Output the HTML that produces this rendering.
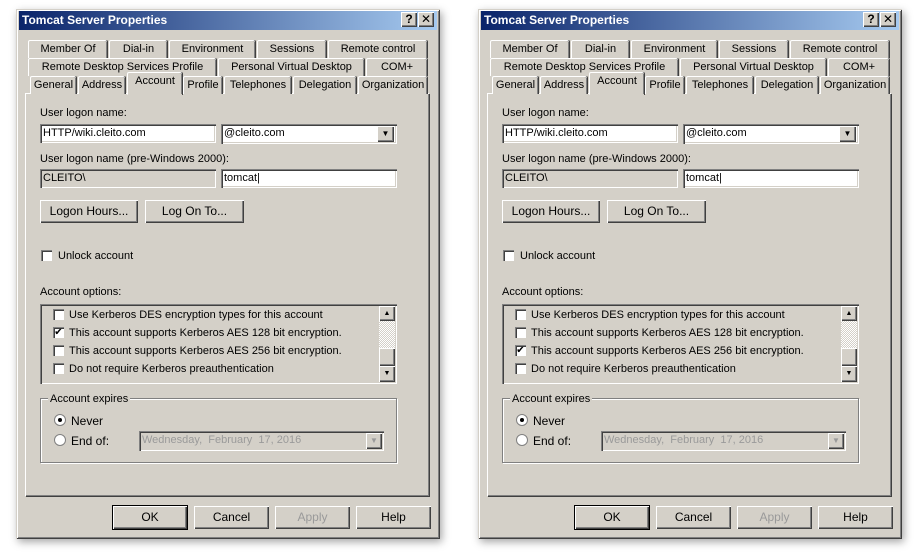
<!DOCTYPE html><html><head><meta charset="utf-8"><style>
body{margin:0;width:919px;height:559px;background:#fff;font-family:"Liberation Sans",Arial,sans-serif;font-size:11px;color:#000;overflow:hidden;position:relative}
.a{position:absolute}
.dlg{position:absolute;top:9px;width:424px;height:530px;background:#d4d0c8;box-shadow:inset 1px 1px #d4d0c8,inset -1px -1px #404040,inset 2px 2px #fff,inset -2px -2px #808080,2px 3px 8px rgba(0,0,0,.35)}
.tb{left:3px;top:2px;width:418px;height:19px;background:linear-gradient(90deg,#0a246a,#a6caf0);color:#fff;font-weight:bold;font-size:12px;line-height:19px;text-indent:3px}
.rb{background:#d4d0c8;box-shadow:inset 1px 1px #fff,inset -1px -1px #404040,inset -2px -2px #808080;text-align:center}
.tab{background:#d4d0c8;border-left:1px solid #fff;border-top:1px solid #fff;box-shadow:inset -1px 0 #808080, 1px 0 #404040;border-radius:2px 2px 0 0;text-align:center;line-height:17px;height:17px}
.pan{left:9px;top:84px;width:403px;height:402px;border-left:1px solid #fff;border-top:1px solid #fff;box-shadow:inset -1px -1px #808080,1px 1px #404040}
.sk{box-shadow:inset 1px 1px #808080,inset 2px 2px #404040,inset -1px -1px #fff,inset -2px -2px #d4d0c8;background:#fff;line-height:18px;text-indent:3px}
.cb{width:11px;height:11px;background:#fff;box-shadow:inset 1px 1px #808080,inset 2px 2px #404040,inset -1px -1px #fff;font-size:10px;line-height:11px;text-align:center}
.rd{width:12px;height:12px;border-radius:50%;background:#fff;border:1px solid #808080;box-sizing:border-box}
.btn{height:23px;line-height:22px;font-size:12px}
</style></head><body>

<div class="dlg" style="left:16px">
<div class="a tb">Tomcat Server Properties</div>
<div class="a rb" style="left:385px;top:3px;width:16px;height:15px;font-weight:bold;line-height:15px;font-size:12px">?</div>
<div class="a rb" style="left:402px;top:3px;width:16px;height:15px;line-height:15px;font-size:12px">✕</div>
<div class="a tab" style="left:12px;top:31px;width:78px">Member Of</div>
<div class="a tab" style="left:93px;top:31px;width:57px">Dial-in</div>
<div class="a tab" style="left:153px;top:31px;width:85px">Environment</div>
<div class="a tab" style="left:241px;top:31px;width:68px">Sessions</div>
<div class="a tab" style="left:312px;top:31px;width:98px">Remote control</div>
<div class="a tab" style="left:12px;top:49px;width:187px">Remote Desktop Services Profile</div>
<div class="a tab" style="left:202px;top:49px;width:145px">Personal Virtual Desktop</div>
<div class="a tab" style="left:350px;top:49px;width:60px">COM+</div>
<div class="a pan"></div>
<div class="a tab" style="left:14px;top:67px;width:45px">General</div>
<div class="a tab" style="left:62px;top:67px;width:46px">Address</div>
<div class="a tab" style="left:111px;top:63px;width:54px;height:21px;border-bottom:1px solid #d4d0c8">Account</div>
<div class="a tab" style="left:167px;top:67px;width:38px">Profile</div>
<div class="a tab" style="left:208px;top:67px;width:66px">Telephones</div>
<div class="a tab" style="left:277px;top:67px;width:62px">Delegation</div>
<div class="a tab" style="left:342px;top:67px;width:68px">Organization</div>
<div class="a" style="left:24px;top:98px">User logon name:</div>
<div class="a sk" style="left:24px;top:115px;width:176px;height:19px">HTTP/wiki.cleito.com</div>
<div class="a sk" style="left:205px;top:115px;width:176px;height:20px">@cleito.com</div>
<div class="a rb" style="left:361px;top:117px;width:17px;height:16px;font-size:8px;line-height:16px">▼</div>
<div class="a" style="left:24px;top:144px">User logon name (pre-Windows 2000):</div>
<div class="a sk" style="left:24px;top:160px;width:176px;height:19px;background:#d4d0c8">CLEITO\</div>
<div class="a sk" style="left:205px;top:160px;width:176px;height:19px">tomcat|</div>
<div class="a rb btn" style="left:24px;top:191px;width:98px">Logon Hours...</div>
<div class="a rb btn" style="left:129px;top:191px;width:99px">Log On To...</div>
<div class="a cb" style="left:25px;top:241px"></div>
<div class="a" style="left:42px;top:241px">Unlock account</div>
<div class="a" style="left:24px;top:277px">Account options:</div>
<div class="a sk" style="left:24px;top:295px;width:357px;height:80px;background:#d4d0c8"></div>
<div class="a cb" style="left:37px;top:300px"></div><div class="a" style="left:53px;top:300px">Use Kerberos DES encryption types for this account</div>
<div class="a cb" style="left:37px;top:318px">✔</div><div class="a" style="left:53px;top:318px">This account supports Kerberos AES 128 bit encryption.</div>
<div class="a cb" style="left:37px;top:336px"></div><div class="a" style="left:53px;top:336px">This account supports Kerberos AES 256 bit encryption.</div>
<div class="a cb" style="left:37px;top:354px"></div><div class="a" style="left:53px;top:354px">Do not require Kerberos preauthentication</div>
<div class="a" style="left:363px;top:297px;width:16px;height:76px;background:repeating-conic-gradient(#fff 0 25%,#d4d0c8 0 50%) 0 0/2px 2px"></div>
<div class="a rb" style="left:363px;top:297px;width:16px;height:15px;font-size:7px;line-height:15px">▲</div>
<div class="a rb" style="left:363px;top:339px;width:16px;height:18px"></div>
<div class="a rb" style="left:363px;top:357px;width:16px;height:16px;font-size:7px;line-height:16px">▼</div>
<div class="a" style="left:24px;top:389px;width:355px;height:63px;border:1px solid #808080;box-shadow:1px 1px #fff,inset 1px 1px #fff"></div>
<div class="a" style="left:32px;top:384px;background:#d4d0c8;padding:0 2px">Account expires</div>
<div class="a rd" style="left:38px;top:405px"><div class="a" style="left:3px;top:3px;width:4px;height:4px;border-radius:50%;background:#000"></div></div>
<div class="a" style="left:55px;top:405px;font-size:12px">Never</div>
<div class="a rd" style="left:38px;top:425px"></div>
<div class="a" style="left:55px;top:425px;font-size:12px">End of:</div>
<div class="a sk" style="left:123px;top:422px;width:245px;height:20px;background:#d4d0c8;color:#9a9a9a">Wednesday,&nbsp; February&nbsp; 17, 2016</div>
<div class="a rb" style="left:350px;top:424px;width:16px;height:16px;font-size:8px;line-height:16px;color:#9a9a9a">▼</div>
<div class="a rb btn" style="left:97px;top:497px;width:74px;box-shadow:0 0 0 1px #000,inset 1px 1px #fff,inset -1px -1px #404040,inset -2px -2px #808080">OK</div>
<div class="a rb btn" style="left:178px;top:497px;width:75px">Cancel</div>
<div class="a rb btn" style="left:259px;top:497px;width:75px;color:#9a9a9a">Apply</div>
<div class="a rb btn" style="left:340px;top:497px;width:75px">Help</div>
</div>

<div class="dlg" style="left:478px">
<div class="a tb">Tomcat Server Properties</div>
<div class="a rb" style="left:385px;top:3px;width:16px;height:15px;font-weight:bold;line-height:15px;font-size:12px">?</div>
<div class="a rb" style="left:402px;top:3px;width:16px;height:15px;line-height:15px;font-size:12px">✕</div>
<div class="a tab" style="left:12px;top:31px;width:78px">Member Of</div>
<div class="a tab" style="left:93px;top:31px;width:57px">Dial-in</div>
<div class="a tab" style="left:153px;top:31px;width:85px">Environment</div>
<div class="a tab" style="left:241px;top:31px;width:68px">Sessions</div>
<div class="a tab" style="left:312px;top:31px;width:98px">Remote control</div>
<div class="a tab" style="left:12px;top:49px;width:187px">Remote Desktop Services Profile</div>
<div class="a tab" style="left:202px;top:49px;width:145px">Personal Virtual Desktop</div>
<div class="a tab" style="left:350px;top:49px;width:60px">COM+</div>
<div class="a pan"></div>
<div class="a tab" style="left:14px;top:67px;width:45px">General</div>
<div class="a tab" style="left:62px;top:67px;width:46px">Address</div>
<div class="a tab" style="left:111px;top:63px;width:54px;height:21px;border-bottom:1px solid #d4d0c8">Account</div>
<div class="a tab" style="left:167px;top:67px;width:38px">Profile</div>
<div class="a tab" style="left:208px;top:67px;width:66px">Telephones</div>
<div class="a tab" style="left:277px;top:67px;width:62px">Delegation</div>
<div class="a tab" style="left:342px;top:67px;width:68px">Organization</div>
<div class="a" style="left:24px;top:98px">User logon name:</div>
<div class="a sk" style="left:24px;top:115px;width:176px;height:19px">HTTP/wiki.cleito.com</div>
<div class="a sk" style="left:205px;top:115px;width:176px;height:20px">@cleito.com</div>
<div class="a rb" style="left:361px;top:117px;width:17px;height:16px;font-size:8px;line-height:16px">▼</div>
<div class="a" style="left:24px;top:144px">User logon name (pre-Windows 2000):</div>
<div class="a sk" style="left:24px;top:160px;width:176px;height:19px;background:#d4d0c8">CLEITO\</div>
<div class="a sk" style="left:205px;top:160px;width:176px;height:19px">tomcat|</div>
<div class="a rb btn" style="left:24px;top:191px;width:98px">Logon Hours...</div>
<div class="a rb btn" style="left:129px;top:191px;width:99px">Log On To...</div>
<div class="a cb" style="left:25px;top:241px"></div>
<div class="a" style="left:42px;top:241px">Unlock account</div>
<div class="a" style="left:24px;top:277px">Account options:</div>
<div class="a sk" style="left:24px;top:295px;width:357px;height:80px;background:#d4d0c8"></div>
<div class="a cb" style="left:37px;top:300px"></div><div class="a" style="left:53px;top:300px">Use Kerberos DES encryption types for this account</div>
<div class="a cb" style="left:37px;top:318px"></div><div class="a" style="left:53px;top:318px">This account supports Kerberos AES 128 bit encryption.</div>
<div class="a cb" style="left:37px;top:336px">✔</div><div class="a" style="left:53px;top:336px">This account supports Kerberos AES 256 bit encryption.</div>
<div class="a cb" style="left:37px;top:354px"></div><div class="a" style="left:53px;top:354px">Do not require Kerberos preauthentication</div>
<div class="a" style="left:363px;top:297px;width:16px;height:76px;background:repeating-conic-gradient(#fff 0 25%,#d4d0c8 0 50%) 0 0/2px 2px"></div>
<div class="a rb" style="left:363px;top:297px;width:16px;height:15px;font-size:7px;line-height:15px">▲</div>
<div class="a rb" style="left:363px;top:339px;width:16px;height:18px"></div>
<div class="a rb" style="left:363px;top:357px;width:16px;height:16px;font-size:7px;line-height:16px">▼</div>
<div class="a" style="left:24px;top:389px;width:355px;height:63px;border:1px solid #808080;box-shadow:1px 1px #fff,inset 1px 1px #fff"></div>
<div class="a" style="left:32px;top:384px;background:#d4d0c8;padding:0 2px">Account expires</div>
<div class="a rd" style="left:38px;top:405px"><div class="a" style="left:3px;top:3px;width:4px;height:4px;border-radius:50%;background:#000"></div></div>
<div class="a" style="left:55px;top:405px;font-size:12px">Never</div>
<div class="a rd" style="left:38px;top:425px"></div>
<div class="a" style="left:55px;top:425px;font-size:12px">End of:</div>
<div class="a sk" style="left:123px;top:422px;width:245px;height:20px;background:#d4d0c8;color:#9a9a9a">Wednesday,&nbsp; February&nbsp; 17, 2016</div>
<div class="a rb" style="left:350px;top:424px;width:16px;height:16px;font-size:8px;line-height:16px;color:#9a9a9a">▼</div>
<div class="a rb btn" style="left:97px;top:497px;width:74px;box-shadow:0 0 0 1px #000,inset 1px 1px #fff,inset -1px -1px #404040,inset -2px -2px #808080">OK</div>
<div class="a rb btn" style="left:178px;top:497px;width:75px">Cancel</div>
<div class="a rb btn" style="left:259px;top:497px;width:75px;color:#9a9a9a">Apply</div>
<div class="a rb btn" style="left:340px;top:497px;width:75px">Help</div>
</div>
</body></html>
